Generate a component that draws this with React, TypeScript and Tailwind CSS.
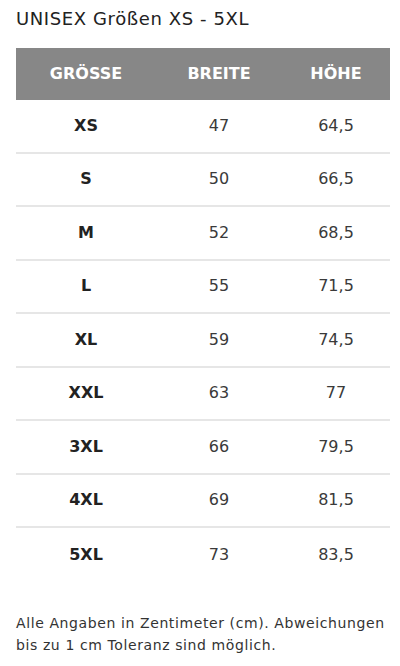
import React from "react";

const rows: [string, string, string][] = [
  ["XS", "47", "64,5"],
  ["S", "50", "66,5"],
  ["M", "52", "68,5"],
  ["L", "55", "71,5"],
  ["XL", "59", "74,5"],
  ["XXL", "63", "77"],
  ["3XL", "66", "79,5"],
  ["4XL", "69", "81,5"],
  ["5XL", "73", "83,5"],
];

export default function App() {
  return (
    <div
      className="w-[400px] h-[666px] bg-white px-4 pt-[6px]"
      style={{ fontFamily: '"DejaVu Sans", sans-serif' }}
    >
      <h1 className="text-[18px] leading-[26px] tracking-[0.6px] text-[#222]">
        UNISEX Größen XS - 5XL
      </h1>
      <div className="mt-4 w-[374px]">
        <div className="grid grid-cols-[140px_126px_108px] h-[52px] items-center bg-[#878787] text-white font-bold text-[16px]">
          <div className="text-center">GRÖSSE</div>
          <div className="text-center">BREITE</div>
          <div className="text-center">HÖHE</div>
        </div>
        {rows.map((r, i) => (
          <div
            key={r[0]}
            className={
              i < rows.length - 1
                ? "grid grid-cols-[140px_126px_108px] h-[53.5px] items-center border-b-2 border-[#e6e6e6] text-[16px] text-[#3a3a3a]"
                : "grid grid-cols-[140px_126px_108px] h-[53.5px] items-center text-[16px] text-[#3a3a3a]"
            }
          >
            <div className="text-center font-bold text-[#222]">{r[0]}</div>
            <div className="text-center">{r[1]}</div>
            <div className="text-center">{r[2]}</div>
          </div>
        ))}
      </div>
      <p className="mt-[30px] w-[374px] text-[14px] leading-[22px] tracking-[0.6px] text-[#333]">
        Alle Angaben in Zentimeter (cm). Abweichungen bis zu 1 cm Toleranz sind möglich.
      </p>
    </div>
  );
}
